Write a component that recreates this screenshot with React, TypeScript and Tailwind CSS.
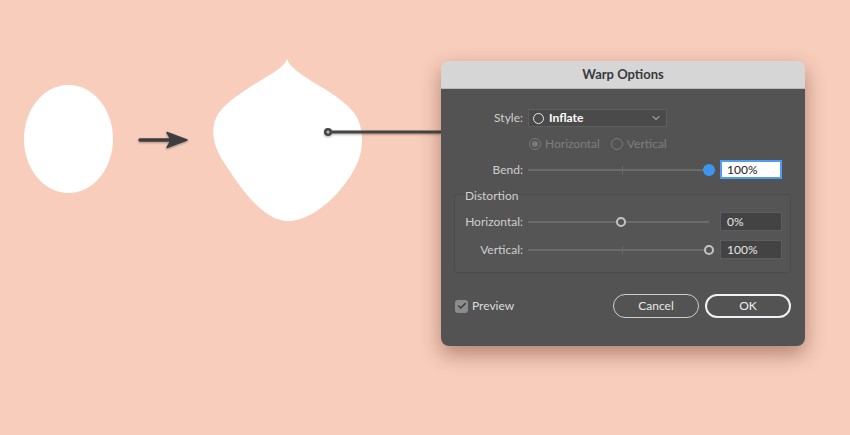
import { Check, ChevronDown } from 'lucide-react';

const font = { fontFamily: 'Lato, "Open Sans", sans-serif' };

const Slider = ({ thumb, value, filled = false }: { thumb: string; value: string; filled?: boolean }) => (
  <div className="flex items-center">
    <div className="relative w-[187px] h-[14px]">
      <div className="absolute left-0 right-[6px] top-[6px] h-[2px] bg-[#6b6b6b]" />
      <div className="absolute left-[94px] top-[3px] h-[8px] w-px bg-[#6b6b6b]" />
      {filled ? (
        <div className={`absolute top-[1px] w-[12px] h-[12px] rounded-full bg-[#3e95ef] ${thumb}`} />
      ) : (
        <div className={`absolute top-[2px] w-[10px] h-[10px] rounded-full border-2 border-[#c4c4c4] bg-[#535353] ${thumb}`} />
      )}
    </div>
    {filled ? (
      <div className="ml-[5px] w-[62px] h-[19px] bg-white border-2 border-[#4f9df2] text-[#222] text-[12px] pl-[5px] leading-[15px]">{value}</div>
    ) : (
      <div className="ml-[5px] w-[62px] h-[19px] bg-[#434343] border border-[#5d5d5d] text-[#e6e6e6] text-[12px] pl-[6px] leading-[17px]">{value}</div>
    )}
  </div>
);

const Illustration = () => (
  <svg width="441" height="435" className="shrink-0">
    <defs>
      <filter id="sh" x="-20%" y="-50%" width="140%" height="200%">
        <feDropShadow dx="0" dy="1" stdDeviation="0.8" floodColor="#000" floodOpacity="0.35" />
      </filter>
    </defs>
    <ellipse cx="68.5" cy="139" rx="44.5" ry="54" fill="#fff" />
    <path
      d="M287 59 C289 66 300 74 313 82 C335 95 356 108 360 125 C364 140 362 155 355 168 C344 190 315 221 288 221 C262 221 238 184 225 164 C214 148 210 132 216 118 C222 104 245 90 268 76 C278 70 285 65 287 59 Z"
      fill="#fff"
    />
    <g filter="url(#sh)">
      <line x1="140" y1="140" x2="175" y2="140" stroke="#3d3d3d" strokeWidth="3.5" strokeLinecap="round" />
      <path d="M167 132.5 L187 140 L167 147.5 L171 140 Z" fill="#3d3d3d" stroke="#3d3d3d" strokeWidth="1.5" strokeLinejoin="round" />
      <line x1="331" y1="132" x2="441" y2="132" stroke="#454545" strokeWidth="3" />
      <circle cx="328" cy="132" r="4" fill="#454545" />
      <circle cx="328" cy="132" r="1.5" fill="#bdbdbd" />
    </g>
  </svg>
);

export default function App() {
  return (
    <div className="w-[850px] h-[435px] bg-[#f8cdbc] flex items-start overflow-hidden" style={font}>
      <Illustration />
      <div className="mt-[61px] w-[364px] h-[285px] rounded-[8px] overflow-hidden shadow-[0_8px_20px_rgba(90,40,20,0.45)] flex flex-col">
        <div className="h-[28px] bg-[#d6d6d6] border-b border-[#b9b9b9] flex items-center justify-center text-[13px] font-bold text-[#3a3a3a]">
          Warp Options
        </div>
        <div className="flex-1 bg-[#535353] pt-[20px] text-[12px] text-[#cfcfcf]">
          <div className="flex items-center h-[18px]">
            <div className="w-[82px] text-right">Style:</div>
            <div className="ml-[5px] w-[139px] h-[18px] bg-[#4a4a4a] border border-[#5e5e5e] flex items-center px-[4px]">
              <span className="w-[11px] h-[11px] rounded-full border border-[#e8e8e8]" />
              <span className="ml-[5px] font-bold text-white text-[12px]">Inflate</span>
              <ChevronDown className="ml-auto w-[12px] h-[12px] text-[#dcdcdc]" strokeWidth={2} />
            </div>
          </div>
          <div className="flex items-center h-[14px] mt-[10px] pl-[88px] text-[#7e7e7e]">
            <span className="w-[12px] h-[12px] rounded-full border border-[#7a7a7a] flex items-center justify-center">
              <span className="w-[6px] h-[6px] rounded-full bg-[#7a7a7a]" />
            </span>
            <span className="ml-[4px]">Horizontal</span>
            <span className="ml-[11px] w-[12px] h-[12px] rounded-full border border-[#7a7a7a]" />
            <span className="ml-[4px]">Vertical</span>
          </div>
          <div className="flex items-center h-[19px] mt-[9px]">
            <div className="w-[82px] text-right">Bend:</div>
            <div className="ml-[5px]">
              <Slider thumb="left-[175px]" value="100%" filled />
            </div>
          </div>
          <div className="ml-[13px] mr-[14px] mt-[15px] h-[79px] border border-[#4b4b4b] rounded-[3px] bg-[#555555]">
            <div className="-mt-[7px] pl-[10px] leading-[15px]">Distortion</div>
            <div className="flex items-center h-[19px] mt-[9px]">
              <div className="w-[68px] text-right">Horizontal:</div>
              <div className="ml-[5px]">
                <Slider thumb="left-[88px]" value="0%" />
              </div>
            </div>
            <div className="flex items-center h-[19px] mt-[9px]">
              <div className="w-[68px] text-right">Vertical:</div>
              <div className="ml-[5px]">
                <Slider thumb="left-[176px]" value="100%" />
              </div>
            </div>
          </div>
          <div className="flex items-center mt-[21px] px-[14px]">
            <span className="w-[13px] h-[13px] rounded-[3px] bg-[#8c8c8c] flex items-center justify-center">
              <Check className="w-[10px] h-[10px] text-[#3c3c3c]" strokeWidth={3.5} />
            </span>
            <span className="ml-[4px] text-[#dcdcdc]">Preview</span>
            <button className="ml-auto w-[86px] h-[24px] rounded-full border border-[#cfcfcf] text-[#e8e8e8] text-[12px]">Cancel</button>
            <button className="ml-[6px] w-[86px] h-[24px] rounded-full border-2 border-[#f0f0f0] text-[#f0f0f0] text-[12px]">OK</button>
          </div>
        </div>
      </div>
    </div>
  );
}
